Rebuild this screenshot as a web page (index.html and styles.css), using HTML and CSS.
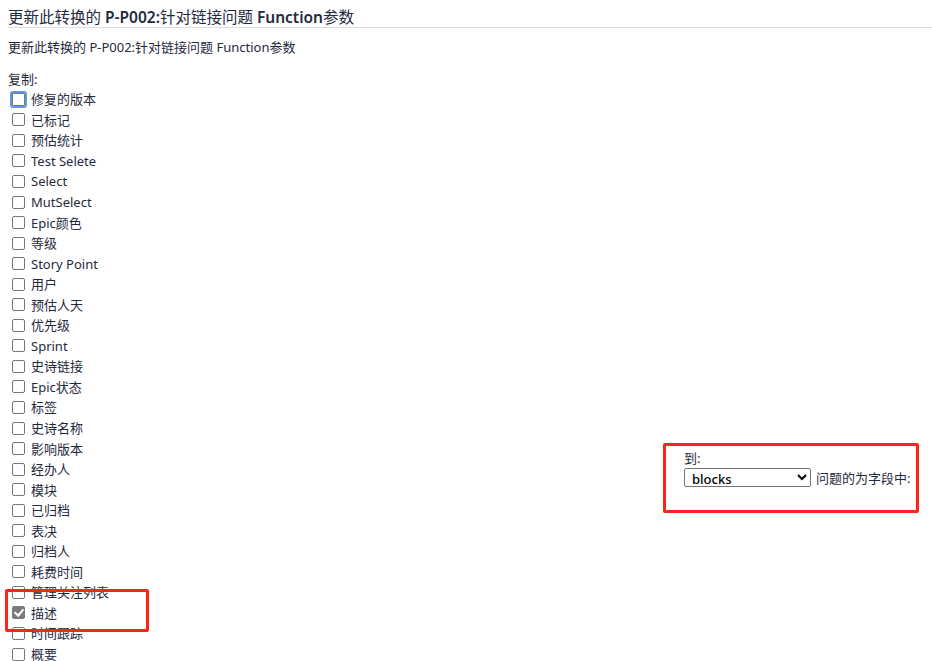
FILE: index.html
```html
<!DOCTYPE html>
<html lang="zh-CN">
<head>
<meta charset="utf-8">
<title>更新此转换的 P-P002:针对链接问题 Function参数</title>
<link rel="stylesheet" href="styles.css">
</head>
<body>
<h2 class="page-title">更新此转换的 <b class="lat">P-P002:</b>针对链接问题 <b class="lat">Function</b>参数</h2>
<p class="desc">更新此转换的 P-P002:针对链接问题 Function参数</p>

<div class="form">
  <div class="left-col">
    <div class="copy-label">复制:</div>
    <label class="row"><input type="checkbox" class="cb focus">修复的版本</label>
    <label class="row"><input type="checkbox" class="cb">已标记</label>
    <label class="row"><input type="checkbox" class="cb">预估统计</label>
    <label class="row"><input type="checkbox" class="cb">Test Selete</label>
    <label class="row"><input type="checkbox" class="cb">Select</label>
    <label class="row"><input type="checkbox" class="cb">MutSelect</label>
    <label class="row"><input type="checkbox" class="cb">Epic颜色</label>
    <label class="row"><input type="checkbox" class="cb">等级</label>
    <label class="row"><input type="checkbox" class="cb">Story Point</label>
    <label class="row"><input type="checkbox" class="cb">用户</label>
    <label class="row"><input type="checkbox" class="cb">预估人天</label>
    <label class="row"><input type="checkbox" class="cb">优先级</label>
    <label class="row"><input type="checkbox" class="cb">Sprint</label>
    <label class="row"><input type="checkbox" class="cb">史诗链接</label>
    <label class="row"><input type="checkbox" class="cb">Epic状态</label>
    <label class="row"><input type="checkbox" class="cb">标签</label>
    <label class="row"><input type="checkbox" class="cb">史诗名称</label>
    <label class="row"><input type="checkbox" class="cb">影响版本</label>
    <label class="row"><input type="checkbox" class="cb">经办人</label>
    <label class="row"><input type="checkbox" class="cb">模块</label>
    <label class="row"><input type="checkbox" class="cb">已归档</label>
    <label class="row"><input type="checkbox" class="cb">表决</label>
    <label class="row"><input type="checkbox" class="cb">归档人</label>
    <label class="row"><input type="checkbox" class="cb">耗费时间</label>
    <label class="row"><input type="checkbox" class="cb">管理关注列表</label>
    <label class="row"><input type="checkbox" class="cb" checked disabled>描述</label>
    <label class="row"><input type="checkbox" class="cb">时间跟踪</label>
    <label class="row"><input type="checkbox" class="cb">概要</label>
  </div>
  <div class="right-col">
    <div class="to-label">到:</div>
    <div class="to-line">
      <select class="sel"><option>blocks</option></select>
      <span class="to-text">问题的为字段中:</span>
    </div>
  </div>
</div>

<div class="mark mark-desc"></div>
<div class="mark mark-to"></div>
</body>
</html>
```
FILE: styles.css
```css
html {
  margin: 0;
  padding: 0;
  background: #fff;
  overflow: hidden;
}
body {
  margin: 8px 0 0 8px;
  padding: 0;
  font-family: "Noto Sans", "Noto Sans CJK SC", sans-serif;
  color: #1f2a3d;
  font-size: 13px;
}
.page-title {
  margin: 0;
  font-size: 15.5px;
  line-height: 18px;
  font-weight: 400;
  padding-bottom: 1px;
  border-bottom: 1px solid #dddddd;
  color: #1f2a3d;
}
.page-title .lat {
  font-weight: 600;
}
.desc {
  margin: 10px 0 0;
  font-size: 13px;
  line-height: 18px;
}
.form {
  display: flex;
  margin-top: 13px;
}
.left-col {
  flex: 0 0 676px;
  display: flex;
  flex-direction: column;
}
.copy-label {
  height: 20px;
  line-height: 20px;
}
.row {
  display: flex;
  align-items: center;
  height: 20.56px;
  line-height: 18px;
  white-space: nowrap;
}
.cb {
  appearance: none;
  -webkit-appearance: none;
  width: 13px;
  height: 13px;
  margin: 0 6px 0 4px;
  border: 1px solid #767676;
  border-radius: 2px;
  background: #fff;
  position: relative;
  flex: none;
}
.cb.focus {
  outline: 2px solid #5b9be4;
  outline-offset: 0;
  border-radius: 1px;
}
.cb:checked {
  background: #7b7b7b;
  border-color: #7b7b7b;
}
.cb:checked::after {
  content: "";
  position: absolute;
  left: 3px;
  top: 0px;
  width: 4px;
  height: 7px;
  border: solid #fff;
  border-width: 0 2px 2px 0;
  transform: rotate(40deg);
}
.right-col {
  padding-top: 380px;
  display: flex;
  flex-direction: column;
}
.to-label {
  line-height: 18px;
  height: 18px;
}
.to-line {
  display: flex;
  align-items: center;
  margin-top: 1px;
}
.sel {
  width: 127px;
  height: 19px;
  margin: 0;
  padding: 0 0 0 3px;
  font-family: "Noto Sans", "Noto Sans CJK SC", sans-serif;
  font-size: 13px;
  font-weight: 500;
  color: #000;
  border: 1px solid #767676;
  border-radius: 2px;
  background: #fff;
}
.to-text {
  margin-left: 5px;
  white-space: nowrap;
}
.mark {
  position: absolute;
  border: 3px solid #ff2418;
  border-radius: 2px;
  box-sizing: border-box;
  z-index: 5;
}
.mark-desc {
  left: 5px;
  top: 589px;
  width: 144px;
  height: 43px;
}
.mark-to {
  left: 663px;
  top: 443px;
  width: 256px;
  height: 70px;
}
```
